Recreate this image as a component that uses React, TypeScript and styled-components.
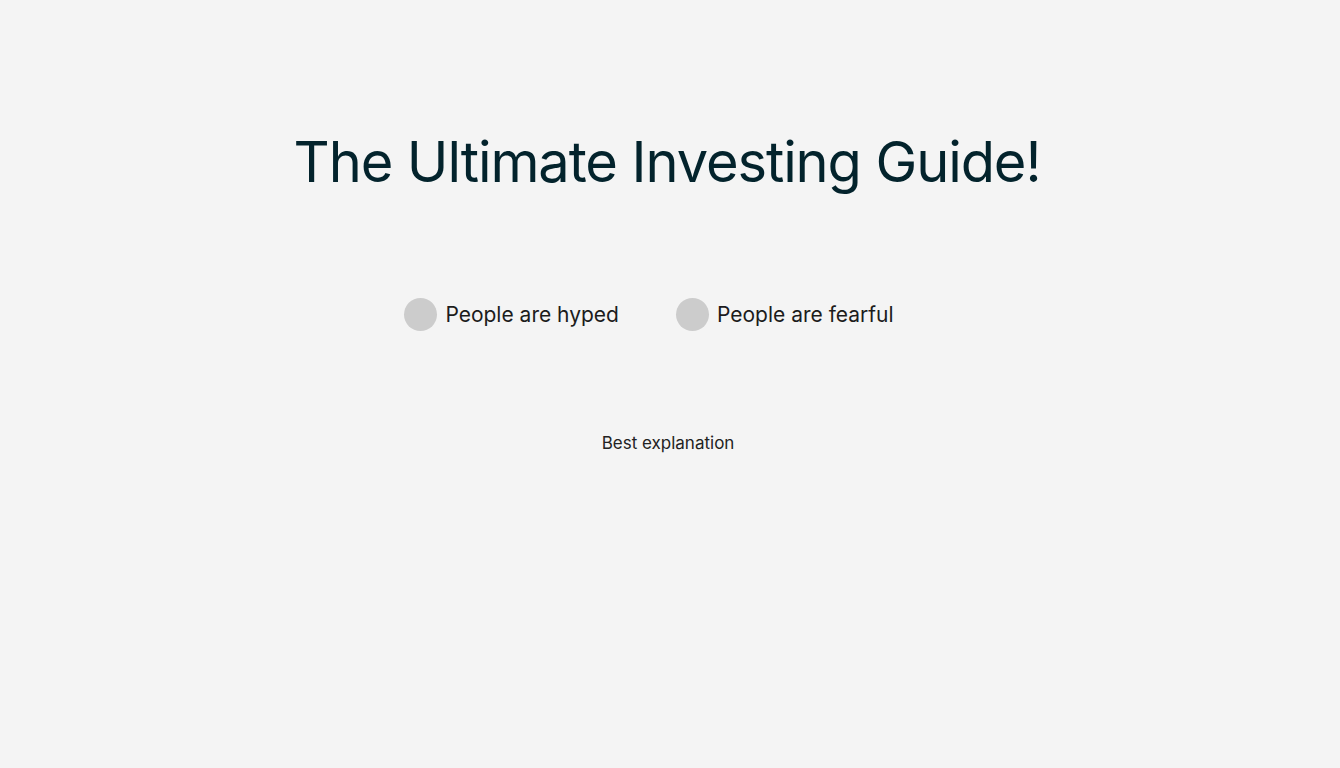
import React from "react";
import styled, { createGlobalStyle } from "styled-components";

const Global = createGlobalStyle`
  html, body { margin: 0; padding: 0; background: #f4f4f4; }
  body { font-family: Inter, "Open Sans", sans-serif; }
`;

const Page = styled.main`
  min-height: 768px;
  display: flex;
  flex-direction: column;
  align-items: center;
  padding-top: 128px;
  box-sizing: border-box;
`;

const Title = styled.h1`
  margin: 0 6px 0 0;
  font-family: Inter, sans-serif;
  font-weight: 400;
  font-size: 56px;
  line-height: 68px;
  color: #03232c;
  letter-spacing: -1.1px;
`;

const Options = styled.div`
  margin-top: 102px;
  display: flex;
  gap: 57px;
  margin-right: 42px;
`;

const Option = styled.label`
  display: flex;
  align-items: center;
  gap: 8px;
  cursor: pointer;
`;

const Dot = styled.span`
  width: 33px;
  height: 33px;
  border-radius: 50%;
  background: #cccccc;
  display: block;
`;

const OptionText = styled.span`
  font-size: 21px;
  color: #1c1c1c;
`;

const Explanation = styled.p`
  margin: 102px 4px 0 0;
  font-size: 17px;
  color: #222;
`;

export default function App() {
  return (
    <>
      <Global />
      <Page>
        <Title>The Ultimate Investing Guide!</Title>
        <Options>
          <Option>
            <Dot />
            <OptionText>People are hyped</OptionText>
          </Option>
          <Option>
            <Dot />
            <OptionText>People are fearful</OptionText>
          </Option>
        </Options>
        <Explanation>Best explanation</Explanation>
      </Page>
    </>
  );
}
